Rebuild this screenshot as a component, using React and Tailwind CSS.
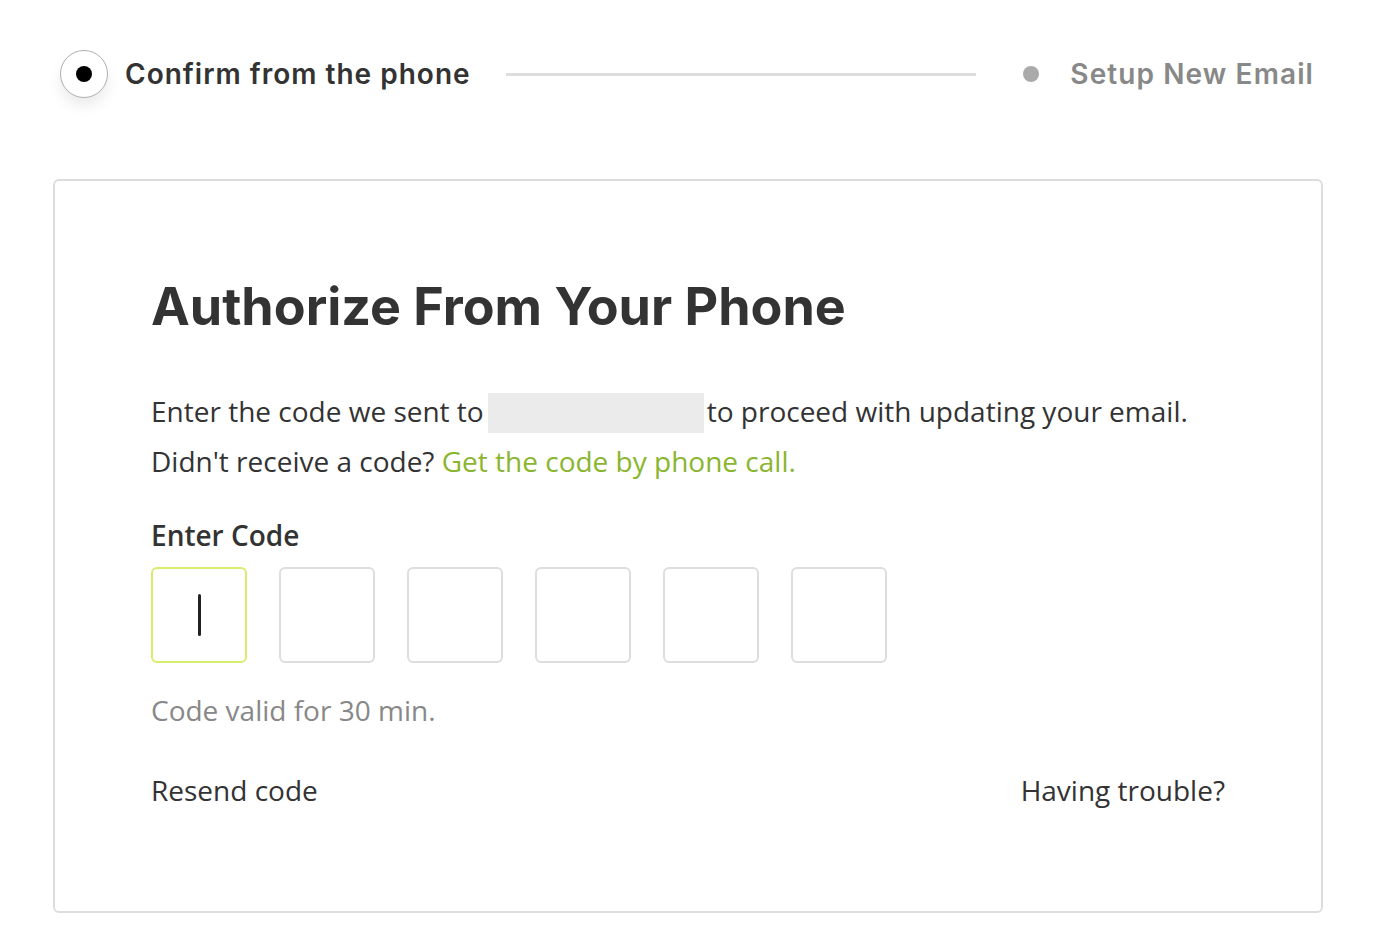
import React from "react";

export default function App() {
  const heading = { fontFamily: "Inter, 'DejaVu Sans', sans-serif" };
  const body = { fontFamily: "'Open Sans', 'Noto Sans', sans-serif" };
  return (
    <div className="w-[1388px] h-[940px] bg-white pl-[53px] pr-[65px] pt-[50px]">
      {/* Stepper */}
      <div className="flex items-center pl-[7px] pr-[9px] h-[48px]" style={heading}>
        <div className="w-[48px] h-[48px] shrink-0 rounded-full border-[1.5px] border-[#b0b0b0] bg-white flex items-center justify-center shadow-[0_8px_14px_rgba(0,0,0,0.08)]">
          <div className="w-[16px] h-[16px] rounded-full bg-black" />
        </div>
        <div className="ml-[17px] text-[28px] font-semibold text-[#333] tracking-[1px] whitespace-nowrap">Confirm from the phone</div>
        <div className="flex-1 h-[3px] bg-[#dddddd] ml-[35px] mr-[47px]" />
        <div className="w-[16px] h-[16px] shrink-0 rounded-full bg-[#aaaaaa]" />
        <div className="ml-[31px] text-[28px] font-semibold text-[#888] tracking-[1.1px] whitespace-nowrap">Setup New Email</div>
      </div>

      {/* Card */}
      <div className="mt-[81px] border-2 border-[#dddddd] rounded-[6px] px-[96px] pt-[96px] pb-[103px]">
        <h1 className="text-[52px] leading-[60px] font-bold text-[#333]" style={heading}>Authorize From Your Phone</h1>
        <div className="mt-[49px] text-[28px] leading-[50px] text-[#333]" style={body}>
          <div>
            Enter the code we sent to
            <span className="inline-block align-middle w-[216px] h-[40px] bg-[#ebebeb] -mt-[4px] ml-[4px] mr-[3px]" />
            to proceed with updating your email.
          </div>
          <div>
            Didn't receive a code?{" "}
            <span className="text-[#8ab52f]">Get the code by phone call.</span>
          </div>
        </div>
        <div className="mt-[31px] text-[28px] leading-[36px] font-semibold text-[#333]" style={body}>Enter Code</div>
        <div className="mt-[14px] flex gap-[32px]">
          <div className="w-[96px] h-[96px] rounded-[6px] border-2 border-[#d6ee6f] flex items-center justify-center">
            <div className="w-[3px] h-[42px] bg-[#222] rounded-full" />
          </div>
          {[0, 1, 2, 3, 4].map((i) => (
            <div key={i} className="w-[96px] h-[96px] rounded-[6px] border-2 border-[#dddddd]" />
          ))}
        </div>
        <div className="mt-[29px] text-[28px] leading-[36px] text-[#888]" style={body}>Code valid for 30 min.</div>
        <div className="mt-[44px] flex justify-between text-[28px] leading-[36px] text-[#333]" style={body}>
          <span>Resend code</span>
          <span>Having trouble?</span>
        </div>
      </div>
    </div>
  );
}
